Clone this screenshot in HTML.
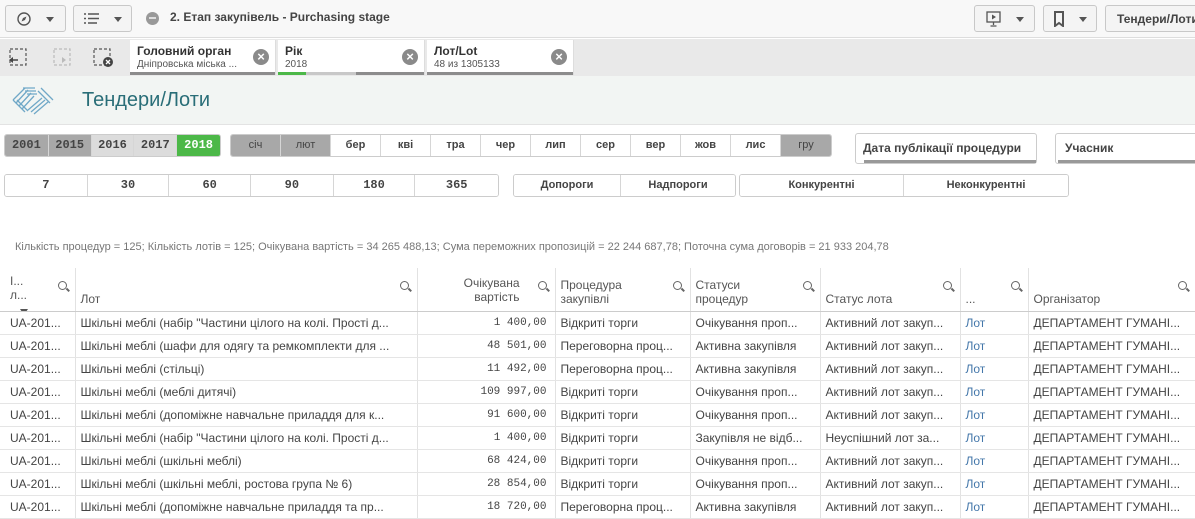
<!DOCTYPE html>
<html><head><meta charset="utf-8"><style>
*{box-sizing:border-box;margin:0;padding:0}
body{width:1195px;height:517px;overflow:hidden;background:#fff;font-family:"Liberation Sans","DejaVu Sans",sans-serif;color:#333;position:relative}
.abs{position:absolute}
.top{left:0;top:0;width:1195px;height:38px;background:#f8f8f8;border-bottom:1px solid #ddd}
.btn{position:absolute;top:5px;height:27px;border:1px solid #c8c8c8;border-radius:3px;background:#f4f4f4;font-size:12px;font-weight:bold;color:#444}
.tri{position:absolute;top:11px;width:0;height:0;border-left:4px solid transparent;border-right:4px solid transparent;border-top:5px solid #555}
.sel{left:0;top:39px;width:1195px;height:37px;background:#e9e9e9}
.chip{position:absolute;top:40px;height:35px;background:#fff;border-right:1px solid #ddd}
.chip b{position:absolute;left:7px;top:4px;font-size:12px;color:#333}
.chip span{position:absolute;left:7px;top:19px;font-size:10px;color:#555}
.chip i{position:absolute;right:6px;top:9px;width:16px;height:16px;border-radius:50%;background:#8a8a8a;color:#fff;font-style:normal;font-size:13px;line-height:16px;text-align:center;font-weight:bold}
.chip u{position:absolute;left:0;bottom:0;height:3px;background:#8c8c8c;width:100%;text-decoration:none}
.title{left:0;top:76px;width:1195px;height:49px;background:#f2f5f3;border-bottom:1px solid #e3e3e3}
.bar{position:absolute;display:flex;border:1px solid #ccc;border-radius:3px;overflow:hidden;height:23px}
.bar div{border-right:1px solid #d6d6d6;font-size:11px;font-weight:bold;text-align:center;line-height:21px;color:#444;background:#fff}
.mono div{font-family:"Liberation Mono",monospace;font-size:12px}
table{position:absolute;left:0;top:268px;border-collapse:collapse;font-size:12px;table-layout:fixed;width:1195px}
td,th{border-right:1px solid #e2e2e2;border-bottom:1px solid #e5e5e5;height:23px;padding:0 5px;white-space:nowrap;overflow:hidden;color:#444;font-weight:normal}
td:first-child,th:first-child{padding-left:10px}
th{height:43px;border-bottom:1px solid #ccc;text-align:left;vertical-align:bottom;padding-bottom:5px;position:relative;color:#555}
.r{text-align:right;font-family:"Liberation Mono",monospace;font-size:11px;padding-right:8px}
.lk{color:#4477aa}
.q{position:absolute;right:8px;top:13px;width:9px;height:9px;border:1.5px solid #666;border-radius:50%}
.q:after{content:"";position:absolute;left:7px;top:7px;width:4px;height:1.5px;background:#666;transform:rotate(45deg)}
</style></head><body>
<div class="abs top"></div>
<div class="btn" style="left:5px;width:61px"><svg class="abs" style="left:11px;top:6px" width="14" height="14"><circle cx="7" cy="7" r="6" fill="none" stroke="#555" stroke-width="1.4"/><path d="M9.5 4.5 L6 6 L4.5 9.5 L8 8Z" fill="#555"/></svg><div class="tri" style="left:40px"></div></div>
<div class="btn" style="left:73px;width:59px"><svg class="abs" style="left:10px;top:7px" width="16" height="12"><path d="M0 1h2M0 5.5h2M0 10h2M4 1h11M4 5.5h11M4 10h9" stroke="#555" stroke-width="1.5"/></svg><div class="tri" style="left:40px"></div></div>
<div class="abs" style="left:146px;top:12px;width:13px;height:13px;border-radius:50%;background:#999"></div>
<div class="abs" style="left:149px;top:17px;width:7px;height:2px;background:#ddd"></div>
<div class="abs" style="left:170px;top:10px;font-size:12px;font-weight:bold;color:#444">2. Етап закупівель - Purchasing stage</div>
<div class="btn" style="left:974px;width:61px"><svg class="abs" style="left:11px;top:5px" width="16" height="16"><rect x="1" y="1" width="13" height="10" fill="none" stroke="#555" stroke-width="1.3"/><path d="M6 3.5v5l4-2.5z" fill="#555"/><path d="M7.5 11v3M4.5 15h6" stroke="#555" stroke-width="1.3"/></svg><div class="tri" style="left:41px"></div></div>
<div class="btn" style="left:1043px;width:54px"><svg class="abs" style="left:10px;top:5px" width="10" height="16"><path d="M1 1h8v14l-4-3-4 3z" fill="none" stroke="#555" stroke-width="2"/></svg><div class="tri" style="left:35px"></div></div>
<div class="btn" style="left:1105px;width:100px;padding:6px 0 0 11px">Тендери/Лоти</div>

<div class="abs sel"></div>
<svg class="abs" style="left:6px;top:48px" width="120" height="22"><g stroke="#555" stroke-width="1.2" fill="none" stroke-dasharray="3 2"><rect x="4" y="1" width="16" height="16"/><rect x="48" y="1" width="16" height="16" stroke="#bbb"/><rect x="88" y="1" width="16" height="16"/></g><path d="M3 12l4-3v6z" fill="#444"/><path d="M5 12h7" stroke="#444" stroke-width="1.5"/><path d="M60 12l-4-3v6z" fill="#bbb"/><circle cx="102" cy="14" r="5" fill="#444"/><path d="M100 12l4 4M104 12l-4 4" stroke="#fff" stroke-width="1.3"/></svg>
<div class="chip" style="left:130px;width:146px"><b>Головний орган</b><span>Дніпровська міська ...</span><i>×</i><u></u></div>
<div class="chip" style="left:278px;width:147px"><b>Рік</b><span>2018</span><i>×</i><u style="background:linear-gradient(90deg,#4cb848 0,#4cb848 28px,#c8c8c8 28px,#c8c8c8 78px,#8c8c8c 78px)"></u></div>
<div class="chip" style="left:427px;width:147px"><b>Лот/Lot</b><span>48 из 1305133</span><i>×</i><u></u></div>

<div class="abs title"></div>
<svg class="abs" style="left:11px;top:84px" width="44" height="32"><g stroke="#5a9bc0" stroke-width="1.3" fill="none" opacity=".85"><path d="M2 16L14 4M5 19L17 6M8 22L20 9M11 25L23 12"/><path d="M12 4h12M14 7h11M16 10h10"/><path d="M42 16L30 4M39 19L27 7M20 28L34 16M23 30L37 18M17 26l14-12"/><path d="M2 16l12 12M6 16l11 11"/></g></svg>
<div class="abs" style="left:82px;top:89px;font-size:20px;color:#2a6e78">Тендери/Лоти</div>

<div class="bar mono" style="left:4px;top:134px;width:217px;height:23px">
<div style="width:44px;background:#a8a8a8">2001</div><div style="width:43px;background:#a8a8a8">2015</div><div style="width:43px;background:#dcdcdc">2016</div><div style="width:43px;background:#dcdcdc">2017</div><div style="width:43px;background:#4cb848;color:#fff;border:none">2018</div></div>
<div class="bar" style="left:230px;top:134px;width:602px">
<div style="width:50px;background:#a8a8a8;font-weight:normal">січ</div><div style="width:50px;background:#a8a8a8;font-weight:normal">лют</div><div style="width:50px">бер</div><div style="width:50px">кві</div><div style="width:50px">тра</div><div style="width:50px">чер</div><div style="width:50px">лип</div><div style="width:50px">сер</div><div style="width:50px">вер</div><div style="width:50px">жов</div><div style="width:50px">лис</div><div style="width:50px;background:#a8a8a8;font-weight:normal;border:none">гру</div></div>
<div class="abs" style="left:855px;top:133px;width:182px;height:31px;border:1px solid #ccc;border-radius:3px;background:#fff;font-size:12px;font-weight:bold;padding:7px 0 0 7px;color:#444">Дата публікації процедури<div class="abs" style="left:8px;bottom:0;right:0;height:3px;background:#999"></div></div>
<div class="abs" style="left:1055px;top:133px;width:150px;height:31px;border:1px solid #ccc;border-radius:3px;background:#fff;font-size:12px;font-weight:bold;padding:7px 0 0 9px;color:#444">Учасник<div class="abs" style="left:2px;bottom:0;right:0;height:3px;background:#999"></div></div>

<div class="bar mono" style="left:4px;top:174px;width:495px">
<div style="width:83px">7</div><div style="width:82px">30</div><div style="width:82px">60</div><div style="width:83px">90</div><div style="width:82px">180</div><div style="width:83px;border:none">365</div></div>
<div class="bar" style="left:513px;top:174px;width:223px"><div style="width:108px">Допороги</div><div style="width:115px;border:none">Надпороги</div></div>
<div class="bar" style="left:739px;top:174px;width:330px"><div style="width:165px">Конкурентні</div><div style="width:165px;border:none">Неконкурентні</div></div>

<div class="abs" style="left:15px;top:241px;font-size:11px;color:#777">Кількість процедур = 125; Кількість лотів = 125; Очікувана вартість = 34 265 488,13; Сума переможних пропозицій = 22 244 687,78; Поточна сума договорів = 21 933 204,78</div>

<table>
<colgroup><col style="width:75px"><col style="width:342px"><col style="width:138px"><col style="width:135px"><col style="width:130px"><col style="width:140px"><col style="width:68px"><col style="width:167px"></colgroup>
<tr><th style="vertical-align:top;padding-top:6px">I...<br>л...<span class="q"></span><div class="abs" style="left:20px;bottom:-4px;border-left:4px solid transparent;border-right:4px solid transparent;border-top:6px solid #555"></div></th><th>Лот<span class="q"></span></th><th style="text-align:right;padding-right:35px;vertical-align:middle;padding-top:6px">Очікувана<br>вартість<span class="q"></span></th><th>Процедура<br>закупівлі<span class="q"></span></th><th>Статуси<br>процедур<span class="q"></span></th><th>Статус лота<span class="q"></span></th><th>...<span class="q"></span></th><th>Організатор<span class="q"></span></th></tr>
<tr><td>UA-201...</td><td>Шкільні меблі (набір "Частини цілого на колі. Прості д...</td><td class="r">1 400,00</td><td>Відкриті торги</td><td>Очікування проп...</td><td>Активний лот закуп...</td><td class="lk">Лот</td><td>ДЕПАРТАМЕНТ ГУМАНІ...</td></tr>
<tr><td>UA-201...</td><td>Шкільні меблі (шафи для одягу та ремкомплекти для ...</td><td class="r">48 501,00</td><td>Переговорна проц...</td><td>Активна закупівля</td><td>Активний лот закуп...</td><td class="lk">Лот</td><td>ДЕПАРТАМЕНТ ГУМАНІ...</td></tr>
<tr><td>UA-201...</td><td>Шкільні меблі (стільці)</td><td class="r">11 492,00</td><td>Переговорна проц...</td><td>Активна закупівля</td><td>Активний лот закуп...</td><td class="lk">Лот</td><td>ДЕПАРТАМЕНТ ГУМАНІ...</td></tr>
<tr><td>UA-201...</td><td>Шкільні меблі (меблі дитячі)</td><td class="r">109 997,00</td><td>Відкриті торги</td><td>Очікування проп...</td><td>Активний лот закуп...</td><td class="lk">Лот</td><td>ДЕПАРТАМЕНТ ГУМАНІ...</td></tr>
<tr><td>UA-201...</td><td>Шкільні меблі (допоміжне навчальне приладдя для к...</td><td class="r">91 600,00</td><td>Відкриті торги</td><td>Очікування проп...</td><td>Активний лот закуп...</td><td class="lk">Лот</td><td>ДЕПАРТАМЕНТ ГУМАНІ...</td></tr>
<tr><td>UA-201...</td><td>Шкільні меблі (набір "Частини цілого на колі. Прості д...</td><td class="r">1 400,00</td><td>Відкриті торги</td><td>Закупівля не відб...</td><td>Неуспішний лот за...</td><td class="lk">Лот</td><td>ДЕПАРТАМЕНТ ГУМАНІ...</td></tr>
<tr><td>UA-201...</td><td>Шкільні меблі (шкільні меблі)</td><td class="r">68 424,00</td><td>Відкриті торги</td><td>Очікування проп...</td><td>Активний лот закуп...</td><td class="lk">Лот</td><td>ДЕПАРТАМЕНТ ГУМАНІ...</td></tr>
<tr><td>UA-201...</td><td>Шкільні меблі (шкільні меблі, ростова група № 6)</td><td class="r">28 854,00</td><td>Відкриті торги</td><td>Очікування проп...</td><td>Активний лот закуп...</td><td class="lk">Лот</td><td>ДЕПАРТАМЕНТ ГУМАНІ...</td></tr>
<tr><td>UA-201...</td><td>Шкільні меблі (допоміжне навчальне приладдя та пр...</td><td class="r">18 720,00</td><td>Переговорна проц...</td><td>Активна закупівля</td><td>Активний лот закуп...</td><td class="lk">Лот</td><td>ДЕПАРТАМЕНТ ГУМАНІ...</td></tr>
</table>
</body></html>
